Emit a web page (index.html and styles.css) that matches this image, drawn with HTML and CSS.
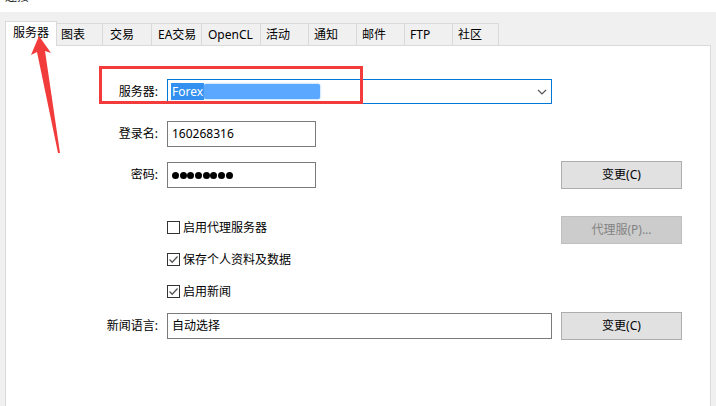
FILE: index.html
```html
<!DOCTYPE html>
<html lang="zh-CN">
<head>
<meta charset="utf-8">
<title>连接</title>
<link rel="stylesheet" href="styles.css">
</head>
<body>
<div class="titlebar"><span class="title-text">连接</span></div>
<div class="window">
  <div class="tabs">
    <div class="tab active">服务器</div>
    <div class="tab t-chart">图表</div>
    <div class="tab t-trade">交易</div>
    <div class="tab t-ea">EA交易</div>
    <div class="tab t-ocl">OpenCL</div>
    <div class="tab t-48">活动</div>
    <div class="tab t-48">通知</div>
    <div class="tab t-48">邮件</div>
    <div class="tab t-48">FTP</div>
    <div class="tab t-46">社区</div>
  </div>
  <div class="panel">
    <div class="form">
      <div class="row row-server">
        <label class="lbl">服务器:</label>
        <div class="combo">
          <span class="sel"><span class="sel-text">Forex</span><span class="sel-blur"></span></span>
          <svg class="chev" width="10" height="6" viewBox="0 0 10 6"><path d="M1 1 L5 5 L9 1" fill="none" stroke="#555" stroke-width="1.2"/></svg>
        </div>
      </div>
      <div class="row row-login">
        <label class="lbl">登录名:</label>
        <div class="field short">160268316</div>
      </div>
      <div class="row row-pass">
        <label class="lbl">密码:</label>
        <div class="field short dots">
          <span class="dot"></span><span class="dot"></span><span class="dot"></span><span class="dot"></span>
          <span class="dot"></span><span class="dot"></span><span class="dot"></span><span class="dot"></span>
        </div>
        <button class="btn">变更(C)</button>
      </div>
      <div class="row row-proxy">
        <span></span>
        <div class="check top">
          <span class="box"></span>启用代理服务器
        </div>
        <button class="btn disabled">代理服(P)...</button>
      </div>
      <div class="row row-save">
        <span></span>
        <div class="check">
          <span class="box"><svg width="11" height="11" viewBox="0 0 11 11"><path d="M1.5 5.5 L4.2 8.2 L9.5 2.5" fill="none" stroke="#555" stroke-width="1.3"/></svg></span>保存个人资料及数据
        </div>
      </div>
      <div class="row row-news">
        <span></span>
        <div class="check">
          <span class="box"><svg width="11" height="11" viewBox="0 0 11 11"><path d="M1.5 5.5 L4.2 8.2 L9.5 2.5" fill="none" stroke="#555" stroke-width="1.3"/></svg></span>启用新闻
        </div>
      </div>
      <div class="row row-lang">
        <label class="lbl">新闻语言:</label>
        <div class="field">自动选择</div>
        <button class="btn">变更(C)</button>
      </div>
    </div>
  </div>
  <div class="mark-box"></div>
  <svg class="mark-arrow" width="40" height="125" viewBox="25 30 40 125">
    <polygon points="39,36 31,55 37,52 58,153 60,153 45,51 51,53" fill="#f23b3b"/>
  </svg>
</div>
</body>
</html>
```

FILE: styles.css
```css
html, body {
  margin: 0;
  padding: 0;
}
body {
  width: 716px;
  height: 406px;
  overflow: hidden;
  background: #f0f0f0;
  font-family: "Noto Sans", "Noto Sans CJK SC", sans-serif;
  font-size: 12px;
  color: #000;
}
.titlebar {
  height: 12px;
  background: #fff;
  overflow: hidden;
  padding-left: 5px;
}
.title-text {
  display: block;
  margin-top: -11px;
  line-height: 16px;
  font-size: 12px;
  color: #222;
}
.window {
  position: relative;
  padding: 9px 5px 0 5px;
}
.tabs {
  display: flex;
  align-items: flex-end;
  height: 24px;
  position: relative;
  z-index: 1;
}
.tab {
  box-sizing: border-box;
  height: 22px;
  border-top: 1px solid #d9d9d9;
  border-right: 1px solid #d9d9d9;
  background: #f0f0f0;
  display: flex;
  align-items: center;
  padding-left: 5px;
  line-height: 1;
  white-space: nowrap;
}
.tab.active {
  width: 52px;
  height: 25px;
  margin-bottom: -1px;
  background: #fff;
  border-left: 1px solid #d9d9d9;
  padding-left: 7px;
  padding-bottom: 2px;
}
.t-chart { width: 46px; padding-left: 4px; }
.t-trade { width: 49px; padding-left: 7px; }
.t-ea { width: 50px; padding-left: 6px; }
.t-ocl { width: 59px; padding-left: 6px; }
.t-48 { width: 48px; }
.t-46 { width: 46px; }
.panel {
  box-sizing: border-box;
  height: 380px;
  background: #fff;
  border: 1px solid #d9d9d9;
}
.form {
  display: flex;
  flex-direction: column;
}
.row {
  display: grid;
  grid-template-columns: 152px 385px 121px;
  column-gap: 9px;
  align-items: center;
}
.lbl {
  text-align: right;
  line-height: 1;
}
.row-server { height: 25px; margin-top: 33px; }
.row-login { height: 25px; margin-top: 17px; }
.row-pass { height: 27px; margin-top: 15px; }
.row-proxy { height: 27px; margin-top: 28px; align-items: start; }
.row-save { height: 13px; margin-top: 10px; }
.row-news { height: 13px; margin-top: 19px; }
.row-lang { height: 27px; margin-top: 14px; }
.combo {
  box-sizing: border-box;
  height: 25px;
  border: 1px solid #0078d7;
  background: #fff;
  position: relative;
  display: flex;
  align-items: center;
  padding-left: 3px;
}
.sel {
  display: flex;
  height: 17px;
  align-items: center;
}
.sel-text {
  background: #3390f0;
  color: #fff;
  height: 17px;
  line-height: 17px;
  padding-left: 1px;
  padding-right: 1px;
}
.sel-blur {
  width: 116px;
  height: 15px;
  background: #5aa8ff;
  border-radius: 2px;
  box-shadow: 0 0 2px #6ab2ff;
}
.chev {
  position: absolute;
  right: 4px;
  top: 9px;
}
.field {
  box-sizing: border-box;
  height: 26px;
  border: 1px solid #7a7a7a;
  background: #fff;
  display: flex;
  align-items: center;
  padding-left: 4px;
  line-height: 1;
}
.field.short {
  width: 149px;
}
.dots {
  gap: 0.7px;
}
.dot {
  width: 7px;
  height: 7px;
  border-radius: 50%;
  background: #000;
}
.btn {
  box-sizing: border-box;
  width: 121px;
  height: 28px;
  border: 1px solid #adadad;
  background: #e1e1e1;
  font: inherit;
  color: #000;
  padding: 0;
  line-height: 1;
}
.btn.disabled {
  background: #cccccc;
  border-color: #bfbfbf;
  color: #838383;
}
.check {
  display: flex;
  align-items: center;
  gap: 3px;
  line-height: 1;
  height: 13px;
}
.check.top {
  margin-top: 5px;
}
.box {
  box-sizing: border-box;
  width: 13px;
  height: 13px;
  border: 1px solid #333;
  background: #fff;
  display: flex;
  align-items: center;
  justify-content: center;
}
.mark-box {
  position: absolute;
  left: 99px;
  top: 54px;
  width: 264px;
  height: 38px;
  box-sizing: border-box;
  border: 3px solid #f23b3b;
  z-index: 2;
}
.mark-arrow {
  position: absolute;
  left: 25px;
  top: 18px;
  z-index: 3;
}
```
